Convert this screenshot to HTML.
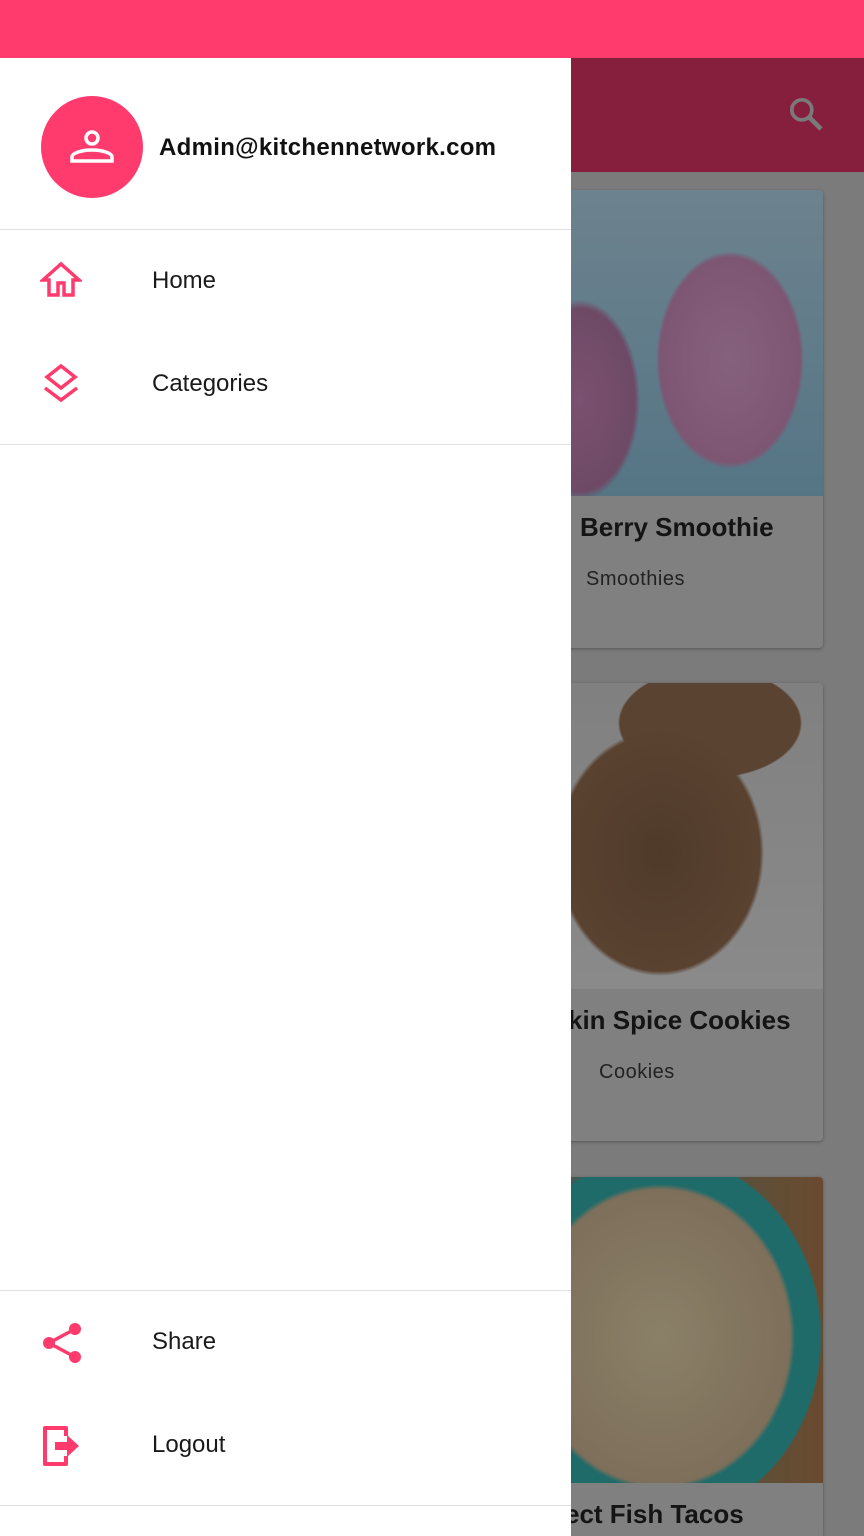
<!DOCTYPE html>
<html style="overflow:hidden;height:1536px"><head><style>
*{margin:0;padding:0;box-sizing:border-box}
body{width:864px;height:1536px;overflow:hidden;position:relative;background:#7b7b7b;font-family:"Liberation Sans",Roboto,sans-serif}
.status{position:absolute;left:0;top:0;width:864px;height:58px;background:#ff3b6d}
.toolbar{position:absolute;left:0;top:58px;width:864px;height:114px;background:#861f3d}
.card{position:absolute;left:540px;width:283px;height:458px;background:#808080;border-radius:4px;box-shadow:0 1px 3px rgba(0,0,0,.3);overflow:hidden}
.img{height:306px}
.t{position:absolute;font-weight:bold;font-size:26px;color:#141414}
.s{position:absolute;font-size:20px;color:#222;letter-spacing:.5px}
.drawer{position:absolute;left:0;top:58px;width:571px;height:1478px;background:#fff}
.hr{position:absolute;left:0;width:571px;height:1px;background:#e2e2e2}
.item{position:absolute;left:152px;font-size:24px;color:#1a1a1a}
.ic{position:absolute;left:40px}
</style></head><body>
<div class="status"></div>
<div class="toolbar">
<svg style="position:absolute;left:786px;top:36px" width="40" height="40" viewBox="0 0 24 24"><circle cx="9.5" cy="9.5" r="6" fill="none" stroke="#7a7a7a" stroke-width="2.2"/><path d="M14 14l7 7" stroke="#7a7a7a" stroke-width="2.8"/></svg>
</div>
<div class="card" style="top:190px"><div class="img" style="background:radial-gradient(ellipse 75px 110px at 190px 170px,#86617e 0,#7d5673 70px,transparent 74px),radial-gradient(ellipse 60px 100px at 40px 210px,#7a5170 0,#6e4a66 55px,transparent 60px),linear-gradient(180deg,#6d828e,#557585)"></div>
<div class="t" style="left:40px;top:322px">Berry Smoothie</div><div class="s" style="left:46px;top:378px">Smoothies</div></div>
<div class="card" style="top:683px"><div class="img" style="background:radial-gradient(ellipse 110px 130px at 120px 170px,#4f3a2a 0,#5a4230 100px,transparent 104px),radial-gradient(ellipse 100px 60px at 170px 40px,#5a4331 0,#5a4331 90px,transparent 92px),linear-gradient(180deg,#808080,#8a8a8a)"></div>
<div class="t" style="left:28px;top:322px">kin Spice Cookies</div><div class="s" style="left:59px;top:378px">Cookies</div></div>
<div class="card" style="top:1177px;height:359px;border-radius:4px 4px 0 0"><div class="img" style="background:radial-gradient(ellipse 150px 170px at 120px 160px,#8a8068 0,#7e6f5a 130px,#1f6b6a 135px,#1f6b6a 160px,transparent 162px),linear-gradient(90deg,#3b5d5a,#6a4a2e)"></div>
<div class="t" style="left:25px;top:322px">ect Fish Tacos</div></div>

<div class="drawer">
<div style="position:absolute;left:41px;top:38px;width:102px;height:102px;border-radius:50%;background:#ff3b6d"></div>
<svg style="position:absolute;left:66px;top:63px" width="52" height="52" viewBox="0 0 52 52"><circle cx="26" cy="17" r="6" fill="none" stroke="#fff" stroke-width="3.5"/><path d="M6 40v-4c0-4 10-7 20-7s20 3 20 7v4z" fill="none" stroke="#fff" stroke-width="3.5"/></svg>
<div style="position:absolute;left:159px;top:76px;font-size:24px;font-weight:bold;color:#111;letter-spacing:0.3px">Admin@kitchennetwork.com</div>
<div class="hr" style="top:171px"></div>
<svg class="ic" style="top:202px" width="42" height="42" viewBox="0 0 42 42"><path d="M3 20L21 4l18 16h-6v15h-9v-12h-6v12H9V20z" fill="none" stroke="#ff3b6d" stroke-width="3.5" stroke-linejoin="miter"/></svg>
<div class="item" style="top:209px">Home</div>
<svg class="ic" style="top:305px" width="42" height="42" viewBox="0 0 42 42"><path d="M21 3L35 14 21 25 7 14z" fill="none" stroke="#ff3b6d" stroke-width="3.5"/><path d="M5 25l16 12 16-12" fill="none" stroke="#ff3b6d" stroke-width="3.5"/></svg>
<div class="item" style="top:312px">Categories</div>
<div class="hr" style="top:386px"></div>
<div class="hr" style="top:1232px"></div>
<svg class="ic" style="top:1264px" width="42" height="42" viewBox="0 0 42 42"><circle cx="35" cy="7" r="6" fill="#ff3b6d"/><circle cx="9" cy="21" r="6" fill="#ff3b6d"/><circle cx="35" cy="35" r="6" fill="#ff3b6d"/><path d="M35 7L9 21l26 14" fill="none" stroke="#ff3b6d" stroke-width="3.5"/></svg>
<div class="item" style="top:1270px">Share</div>
<svg class="ic" style="top:1366px" width="42" height="42" viewBox="0 0 42 42"><path d="M26 12V4H5v36h21v-8" fill="none" stroke="#ff3b6d" stroke-width="4" stroke-linejoin="round"/><path d="M15 18h12v-7l12 11-12 11v-7H15z" fill="#ff3b6d"/></svg>
<div class="item" style="top:1373px">Logout</div>
<div class="hr" style="top:1447px"></div>
</div>
</body></html>
